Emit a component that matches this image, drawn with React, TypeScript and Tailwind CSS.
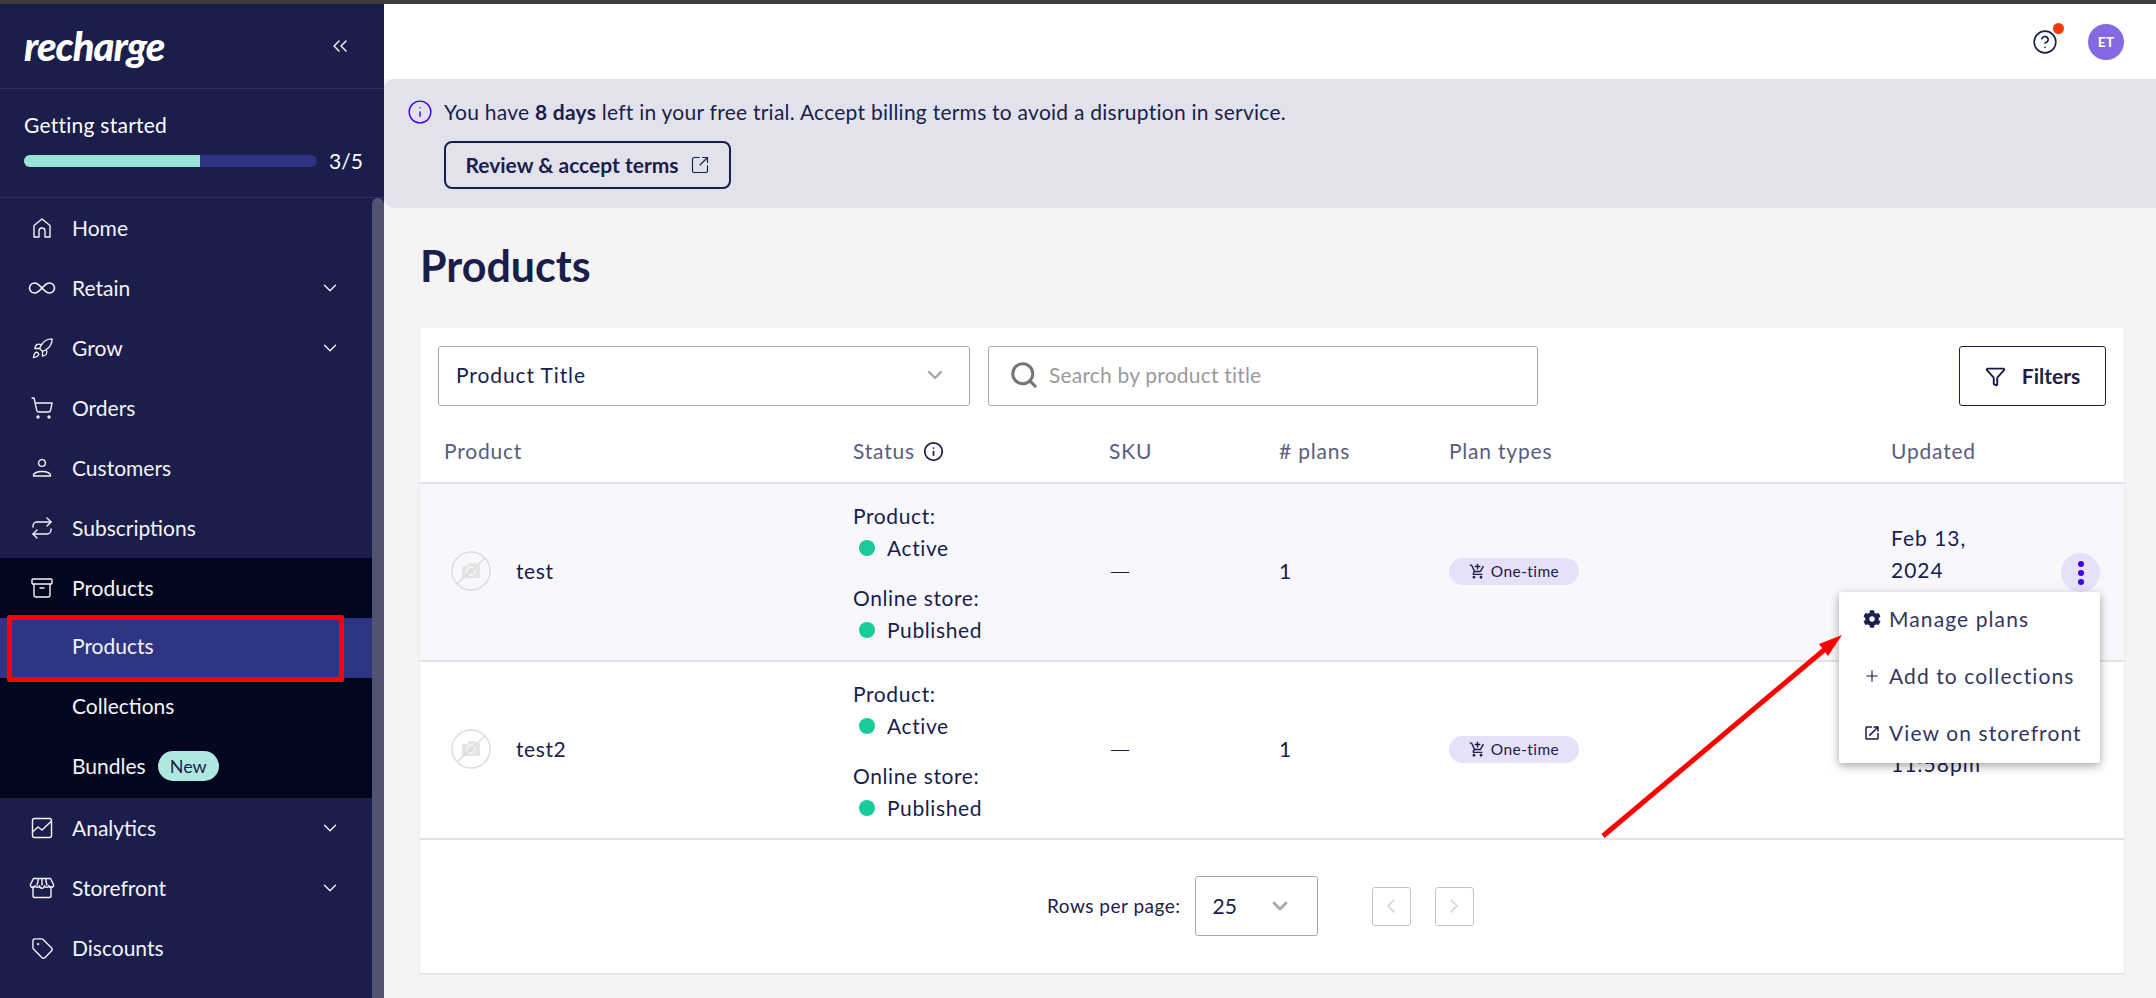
import { Archive, ChevronDown, ChevronLeft, ChevronRight, ChevronsLeft, CircleHelp, Filter, Info, Plus, Repeat, Rocket, Search, ShoppingCart, SquareArrowOutUpRight, Tag, Infinity as InfinityIcon } from 'lucide-react'
import { FaCog } from 'react-icons/fa'
import { MdOpenInNew, MdOutlineAddShoppingCart } from 'react-icons/md'
import type { ReactNode } from 'react'

const font = 'font-[Lato,sans-serif]'

function HomeIcon() {
  return (
    <svg width="24" height="24" viewBox="0 0 24 24" fill="none" stroke="currentColor" strokeWidth="1.4" strokeLinejoin="round">
      <path d="M4 21V9.5L12 3l8 6.500V21h-5v-6a3 3 0 0 0-6 0v6z" />
    </svg>
  )
}

function CustomerIcon() {
  return (
    <svg width="24" height="24" viewBox="0 0 24 24" fill="none" stroke="currentColor" strokeWidth="1.4" strokeLinejoin="round">
      <circle cx="12" cy="7" r="3.400" />
      <path d="M3.500 20v-1c0-2 3.800-3.500 8.500-3.500s8.500 1.500 8.500 3.500v1z" />
    </svg>
  )
}

function AnalyticsIcon() {
  return (
    <svg width="24" height="24" viewBox="0 0 24 24" fill="none" stroke="currentColor" strokeWidth="1.4" strokeLinejoin="round">
      <rect x="2.500" y="2.500" width="19" height="19" rx="2" />
      <path d="M2.500 16 8 11l4 3 9.500-9" />
    </svg>
  )
}

function StoreIcon() {
  return (
    <svg width="26" height="24" viewBox="0 0 26 24" fill="none" stroke="currentColor" strokeWidth="1.4" strokeLinejoin="round">
      <path d="M4 10v10a1.500 1.500 0 0 0 1.500 1.500h15A1.500 1.500 0 0 0 22 20V10" />
      <path d="M4.500 2.500h17l3 6a2.300 2.300 0 0 1-4.600 1.200 2.300 2.300 0 0 1-4.400 0 2.500 2.500 0 0 1-5 0 2.300 2.300 0 0 1-4.400 0A2.300 2.300 0 0 1 1.500 8.500z" />
      <path d="M9.500 2.500 8 9.500M13 2.500v7M16.500 2.500l1.500 7" />
    </svg>
  )
}

function NavRow({ icon, label, chevron, sub, children }: { icon?: ReactNode; label: string; chevron?: boolean; sub?: boolean; children?: ReactNode }) {
  return (
    <div className={`flex h-[60px] items-center text-[21px] text-[#f3f3f7] ${sub ? 'pb-[5px]' : ''}`}>
      <span className="flex w-[72px] shrink-0 justify-center pl-[12px]">{icon}</span>
      <span>{label}</span>
      {children}
      {chevron && <ChevronDown size={22} strokeWidth={1.5} className="ml-auto mr-[31px]" />}
    </div>
  )
}

function StatusBlock() {
  return (
    <div className="pt-[2px] text-[21px] leading-[32px] tracking-[0.6px]">
      <div>Product:</div>
      <div className="flex items-center pl-[6px]">
        <span className="mr-[12px] h-[16px] w-[16px] rounded-full bg-[#17cc9a]" />
        Active
      </div>
      <div className="mt-[18px]">Online store:</div>
      <div className="flex items-center pl-[6px]">
        <span className="mr-[12px] h-[16px] w-[16px] rounded-full bg-[#17cc9a]" />
        Published
      </div>
    </div>
  )
}

function NoImage() {
  return (
    <svg width="40" height="40" viewBox="0 0 40 40" fill="none" className="shrink-0">
      <circle cx="20" cy="20" r="19" stroke="#dcdcdc" strokeWidth="1.400" />
      <path d="M11 15h5l2-3h7v2h4v13H11z" fill="#e4e4e4" />
      <circle cx="20" cy="20" r="4" stroke="#f8f8fc" strokeWidth="1.300" />
      <path d="M6 33 34 7" stroke="#dcdcdc" strokeWidth="1.600" />
    </svg>
  )
}

function PlanChip() {
  return (
    <span className="inline-flex h-[27px] w-[130px] items-center justify-center gap-[5px] rounded-full bg-[#e6e0f8] text-[15.5px] tracking-[0.4px] text-[#1b1d4b]">
      <MdOutlineAddShoppingCart size={17} />
      One-time
    </span>
  )
}

function ProductRow({ name, dates, active, children }: { name: string; dates: string[]; active?: boolean; children?: ReactNode }) {
  return (
    <div className={`relative grid h-[178px] grid-cols-[433px_256px_170px_170px_442px_1fr] items-center border-b-2 border-[#e3e3e6] text-[#1b1d4b] ${active ? 'bg-[#f8f8fc]' : 'bg-white'}`}>
      <div className="flex items-center gap-[25px] pb-[2px] pl-[31px] text-[21px] tracking-[0.6px]">
        <NoImage />
        {name}
      </div>
      <StatusBlock />
      <div className="pb-[4px] text-[28px] font-light leading-none">—</div>
      <div className="pb-[2px] text-[21px]">1</div>
      <div><PlanChip /></div>
      <div className="w-[100px] pb-[5px] text-[21px] leading-[32px] tracking-[1px]">
        {dates.map((d) => <div key={d} className="whitespace-nowrap">{d}</div>)}
      </div>
      {children}
    </div>
  )
}

function MenuItem({ icon, label }: { icon: ReactNode; label: string }) {
  return (
    <div className="flex h-[57px] items-center gap-[8px] pb-[4px] pl-[24px] text-[21px] tracking-[1.1px] text-[#34365f]">
      <span className="flex w-[18px] justify-center text-[#1b1d4b]">{icon}</span>
      {label}
    </div>
  )
}

export default function App() {
  return (
    <div className={`relative flex h-[998px] w-[2156px] flex-col overflow-hidden bg-[#f4f4f4] ${font}`}>
      <div className="h-[4px] bg-[#3c3c3c]" />
      <div className="flex min-h-0 flex-1">
        {/* sidebar */}
        <aside className="flex w-[384px] shrink-0 flex-col bg-[#1b1d4b] text-white">
          <div className="flex h-[85px] items-center justify-between border-b border-[#2a2d66] pl-[24px] pr-[32px]">
            <span className="text-[40px] font-black italic leading-none tracking-[-1px]">recharge</span>
            <ChevronsLeft size={24} strokeWidth={1.4} />
          </div>
          <div className="h-[109px] border-b border-[#2a2d66] px-[24px] pt-[20px]">
            <div className="text-[21px] leading-[32px] tracking-[0.25px]">Getting started</div>
            <div className="mt-[9px] flex items-center gap-[12px]">
              <div className="flex h-[12px] w-[293px] shrink-0 overflow-hidden rounded-full bg-[#2f3585]">
                <div className="h-full w-[176px] bg-[#9ae3d9]" />
              </div>
              <span className="text-[21px] leading-none">3/5</span>
            </div>
          </div>
          <div className="flex min-h-0 flex-1">
            <nav className="min-w-0 flex-1">
              <NavRow label="Home" icon={<HomeIcon />} />
              <NavRow label="Retain" chevron icon={<InfinityIcon size={30} strokeWidth={1.3} />} />
              <NavRow label="Grow" chevron icon={<Rocket size={23} strokeWidth={1.4} />} />
              <NavRow label="Orders" icon={<ShoppingCart size={24} strokeWidth={1.4} />} />
              <NavRow label="Customers" icon={<CustomerIcon />} />
              <NavRow label="Subscriptions" icon={<Repeat size={24} strokeWidth={1.4} />} />
              <div className="h-[240px] bg-[#03061f]">
                <NavRow label="Products" icon={<Archive size={24} strokeWidth={1.4} />} />
                <div className="bg-[#2f3585]"><NavRow sub label="Products" /></div>
                <NavRow sub label="Collections" />
                <NavRow sub label="Bundles">
                  <span className="ml-[12px] rounded-full bg-[#aee8e0] px-[12px] py-[3px] text-[18px] leading-[24px] text-[#1b1d4b]">New</span>
                </NavRow>
              </div>
              <NavRow label="Analytics" chevron icon={<AnalyticsIcon />} />
              <NavRow label="Storefront" chevron icon={<StoreIcon />} />
              <NavRow label="Discounts" icon={<Tag size={23} strokeWidth={1.4} />} />
            </nav>
            <div className="w-[12px] rounded-t-[6px] bg-[#525370]" />
          </div>
        </aside>

        {/* main */}
        <main className="min-w-0 flex-1 text-[#1b1d4b]">
          <div className="flex h-[75px] items-center justify-end gap-[30px] bg-white pr-[32px]">
            <span className="relative">
              <CircleHelp size={26} strokeWidth={1.5} />
              <span className="absolute -right-[6px] -top-[6px] h-[11px] w-[11px] rounded-full bg-[#f23a0c]" />
            </span>
            <span className="flex h-[36px] w-[36px] items-center justify-center rounded-full bg-[#8667e4] text-[14px] font-bold text-white">ET</span>
          </div>
          <div className="h-[129px] rounded-l-[10px] bg-[#e2e2ec] pl-[23px] pt-[18px]">
            <div className="flex items-center gap-[11px] text-[21px] leading-[30px] tracking-[0.25px]">
              <Info size={26} strokeWidth={1.3} className="text-[#3d00f5]" />
              <span>You have <b>8 days</b> left in your free trial. Accept billing terms to avoid a disruption in service.</span>
            </div>
            <button className="ml-[37px] mt-[14px] flex h-[48px] w-[287px] items-center justify-center gap-[11px] rounded-[8px] border-2 border-[#1b1d4b] text-[21px] font-bold">
              Review &amp; accept terms
              <SquareArrowOutUpRight size={20} strokeWidth={1.4} />
            </button>
          </div>
          <div className="pl-[36px] pr-[32px]">
            <h1 className="mt-[34px] h-[86px] text-[43px] font-bold leading-[48px]">Products</h1>
            <section className="h-[645px] rounded-[2px] bg-white shadow-[0_1px_2px_rgba(0,0,0,0.12)]">
              <div className="flex h-[78px] items-end gap-[18px] pl-[18px]">
                <div className="flex h-[60px] w-[532px] items-center justify-between rounded-[3px] border border-[#a8a8a8] pb-[2px] pl-[17px] pr-[22px] text-[21px] tracking-[0.9px]">
                  Product Title
                  <ChevronDown size={24} strokeWidth={2.4} className="text-[#a8a8a8]" />
                </div>
                <div className="flex h-[60px] w-[550px] items-center gap-[10px] rounded-[3px] border border-[#a8a8a8] pb-[2px] pl-[20px] text-[21px] tracking-[0.2px] text-[#9a9a9a]">
                  <Search size={30} strokeWidth={2.4} className="text-[#757575]" />
                  Search by product title
                </div>
                <button className="ml-auto mr-[18px] flex h-[60px] w-[147px] items-center justify-center gap-[16px] rounded-[3px] border-[1.5px] border-[#1b1d4b] text-[21px] font-bold">
                  <Filter size={21} strokeWidth={2.2} />
                  Filters
                </button>
              </div>
              <div className="grid h-[78px] grid-cols-[433px_256px_170px_170px_442px_1fr] items-center border-b-2 border-[#e3e3e6] pt-[14px] text-[21px] tracking-[0.8px] text-[#5a5c7d]">
                <div className="pl-[24px]">Product</div>
                <div className="flex items-center gap-[8px]">Status <Info size={21} strokeWidth={2} className="text-[#1b1d4b]" /></div>
                <div>SKU</div>
                <div># plans</div>
                <div>Plan types</div>
                <div>Updated</div>
              </div>
              <ProductRow active name="test" dates={['Feb 13,', '2024', '11:56pm']}>
                {/* open row menu */}
                <span className="absolute right-[24px] top-[69px] flex h-[39px] w-[39px] flex-col items-center justify-center gap-[3px] rounded-full bg-[#e6e0f8]">
                  <i className="h-[6px] w-[6px] rounded-full bg-[#3d00f5]" />
                  <i className="h-[6px] w-[6px] rounded-full bg-[#3d00f5]" />
                  <i className="h-[6px] w-[6px] rounded-full bg-[#3d00f5]" />
                </span>
                <div className="absolute right-[24px] top-[108px] z-10 h-[171px] w-[261px] rounded-[3px] bg-white shadow-[0_3px_10px_rgba(0,0,0,0.35)]">
                  <MenuItem icon={<FaCog size={18} />} label="Manage plans" />
                  <MenuItem icon={<Plus size={18} strokeWidth={1.6} />} label="Add to collections" />
                  <MenuItem icon={<MdOpenInNew size={20} />} label="View on storefront" />
                </div>
              </ProductRow>
              <ProductRow name="test2" dates={['Feb 13,', '11:58pm']} />
              <div className="flex h-[132px] items-center pl-[627px] text-[#1b1d4b]">
                <span className="text-[19px] tracking-[0.5px]">Rows per page:</span>
                <div className="ml-[14px] flex h-[60px] w-[123px] items-center justify-between rounded-[3px] border border-[#a8a8a8] pl-[17px] pr-[25px] text-[21px]">
                  25
                  <ChevronDown size={24} strokeWidth={2.8} className="text-[#a8a8a8]" />
                </div>
                <span className="ml-[54px] flex h-[39px] w-[39px] items-center justify-center rounded-[3px] border border-[#c4c4c4] text-[#d4d4d4]"><ChevronLeft size={24} strokeWidth={1.6} /></span>
                <span className="ml-[24px] flex h-[39px] w-[39px] items-center justify-center rounded-[3px] border border-[#c4c4c4] text-[#d4d4d4]"><ChevronRight size={24} strokeWidth={1.6} /></span>
              </div>
            </section>
          </div>
        </main>
      </div>

      {/* red annotations drawn on top of the screenshot */}
      <div className="absolute left-[7px] top-[615px] z-20 h-[67px] w-[337px] rounded-[2px] border-[5px] border-[#fe0000]" />
      <svg className="absolute left-0 top-0 z-20" width="2156" height="998" viewBox="0 0 2156 998" fill="none">
        <path d="M1603 836 1824 650" stroke="#fe0000" strokeWidth="5" />
        <path d="M1842 635 1819 644 1828 656Z" fill="#fe0000" />
      </svg>
    </div>
  )
}
